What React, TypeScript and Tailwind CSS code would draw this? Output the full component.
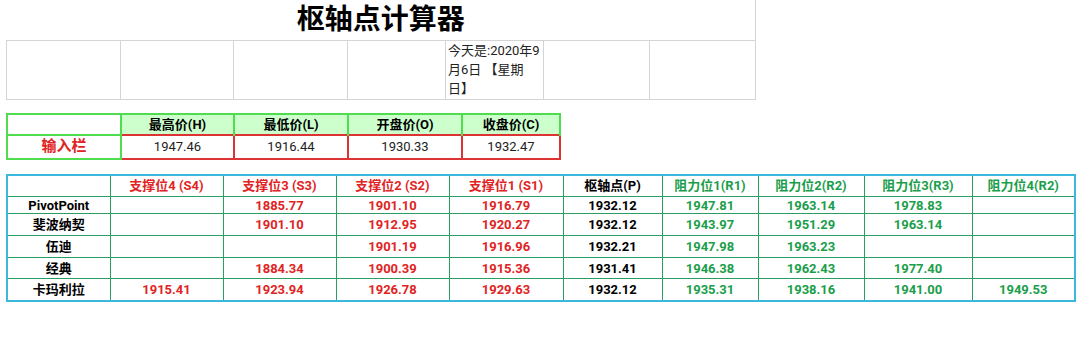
const font = { fontFamily: 'Roboto, "Noto Sans CJK SC", sans-serif' }

const inputHeads = ['最高价(H)', '最低价(L)', '开盘价(O)', '收盘价(C)']
const inputVals = ['1947.46', '1916.44', '1930.33', '1932.47']

const red = 'text-[#e02424]'
const green = 'text-[#1b9e4b]'

const heads = [
  { t: '支撑位4 (S4)', c: red },
  { t: '支撑位3 (S3)', c: red },
  { t: '支撑位2 (S2)', c: red },
  { t: '支撑位1 (S1)', c: red },
  { t: '枢轴点(P)', c: 'text-black' },
  { t: '阻力位1(R1)', c: green },
  { t: '阻力位2(R2)', c: green },
  { t: '阻力位3(R3)', c: green },
  { t: '阻力位4(R2)', c: green },
]

const rows = [
  { name: 'PivotPoint', h: 'h-[17px]', v: ['', '1885.77', '1901.10', '1916.79', '1932.12', '1947.81', '1963.14', '1978.83', ''] },
  { name: '斐波纳契', h: 'h-[22px]', v: ['', '1901.10', '1912.95', '1920.27', '1932.12', '1943.97', '1951.29', '1963.14', ''] },
  { name: '伍迪', h: 'h-[22px]', v: ['', '', '1901.19', '1916.96', '1932.21', '1947.98', '1963.23', '', ''] },
  { name: '经典', h: 'h-[21px]', v: ['', '1884.34', '1900.39', '1915.36', '1931.41', '1946.38', '1962.43', '1977.40', ''] },
  { name: '卡玛利拉', h: 'h-[22px]', v: ['1915.41', '1923.94', '1926.78', '1929.63', '1932.12', '1935.31', '1938.16', '1941.00', '1949.53'] },
]

export default function App() {
  return (
    <div className="w-[1080px] h-[364px] bg-white pl-[6px]" style={font}>
      {/* 标题 + 日期 */}
      <table className="border-collapse table-fixed w-[749px]">
        <colgroup>
          <col className="w-[114px]" />
          <col className="w-[113px]" />
          <col className="w-[114px]" />
          <col className="w-[98px]" />
          <col className="w-[98px]" />
          <col className="w-[106px]" />
          <col className="w-[106px]" />
        </colgroup>
        <tbody>
          <tr className="h-[40px]">
            <td colSpan={7} className="border-r border-[#d4d4d4] text-center text-[28px] font-bold leading-none text-black">
              枢轴点计算器
            </td>
          </tr>
          <tr className="h-[59px]">
            <td className="border border-[#d4d4d4]"></td>
            <td className="border border-[#d4d4d4]"></td>
            <td className="border border-[#d4d4d4]"></td>
            <td className="border border-[#d4d4d4]"></td>
            <td className="border border-[#d4d4d4] align-top pl-[2px] text-[13px] leading-[19px] text-[#222]">
              今天是:2020年9月6日 【星期日】
            </td>
            <td className="border border-[#d4d4d4]"></td>
            <td className="border border-[#d4d4d4]"></td>
          </tr>
        </tbody>
      </table>

      {/* 输入栏 */}
      <table className="border-collapse table-fixed w-[553px] mt-[13px]">
        <colgroup>
          <col className="w-[114px]" />
          <col className="w-[113px]" />
          <col className="w-[114px]" />
          <col className="w-[114px]" />
          <col className="w-[98px]" />
        </colgroup>
        <tbody>
          <tr className="h-[21px]">
            <td className="border-2 border-[#4fdc4f]"></td>
            {inputHeads.map((h) => (
              <td key={h} className="border-2 border-b-0 border-[#4fdc4f] bg-[#ccffcc] text-center text-[13px] font-bold leading-none text-black">
                {h}
              </td>
            ))}
          </tr>
          <tr className="h-[24px]">
            <td className="border-2 border-[#4fdc4f] text-center text-[15px] font-bold leading-none text-[#e02424]">输入栏</td>
            {inputVals.map((v) => (
              <td key={v} className="border-2 border-[#dd3333] text-center text-[13px] leading-none text-[#222]">
                {v}
              </td>
            ))}
          </tr>
        </tbody>
      </table>

      {/* 计算结果 */}
      <table className="border-collapse table-fixed w-[1068px] mt-[14px] border-2 border-[#3cb8dc]">
        <colgroup>
          <col className="w-[103px]" />
          <col className="w-[113px]" />
          <col className="w-[113px]" />
          <col className="w-[113px]" />
          <col className="w-[114px]" />
          <col className="w-[99px]" />
          <col className="w-[96px]" />
          <col className="w-[106px]" />
          <col className="w-[108px]" />
          <col className="w-[103px]" />
        </colgroup>
        <tbody>
          <tr className="h-[22px]">
            <td className="border border-[#2a9d62]"></td>
            {heads.map((h) => (
              <td key={h.t} className={`${h.c} border border-[#2a9d62] text-center text-[13px] font-bold leading-none`}>
                {h.t}
              </td>
            ))}
          </tr>
          {rows.map((r) => (
            <tr key={r.name} className={r.h}>
              <td className={`${r.h} border border-[#2a9d62] text-center text-[13px] font-bold leading-[13px] text-black`}>{r.name}</td>
              {r.v.map((v, i) => (
                <td key={i} className={`${heads[i].c} border border-[#2a9d62] text-center text-[13px] font-bold leading-[13px]`}>
                  {v}
                </td>
              ))}
            </tr>
          ))}
        </tbody>
      </table>
    </div>
  )
}
